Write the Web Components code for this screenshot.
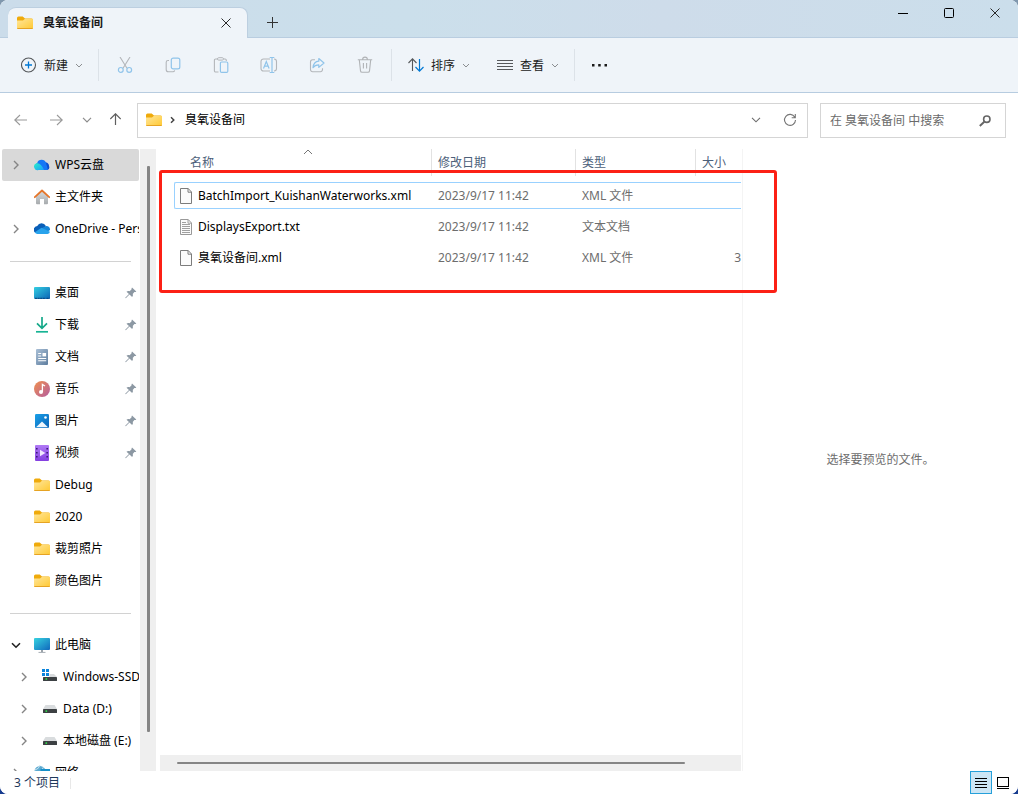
<!DOCTYPE html>
<html lang="zh-CN">
<head>
<meta charset="utf-8">
<meta name="viewport" content="width=device-width, initial-scale=1">
<title>臭氧设备间</title>
<style>
  body {
    margin: 0;
    background: linear-gradient(#7f97ad 50%, #173c8f 50%);
    color: #000;
    font: 12px/16px "Noto Sans", "Noto Sans CJK SC", sans-serif;
  }
</style>
</head>
<body>
<explorer-window></explorer-window>

<script>
const RESET = `
  *, *::before, *::after { box-sizing: border-box; }
  button { font: inherit; color: inherit; background: none; border: 0; padding: 0; margin: 0;
           display: flex; align-items: center; justify-content: center; }
  a { color: inherit; text-decoration: none; }
`;

function define(name, css, html, setup) {
  const template = document.createElement('template');
  template.innerHTML = `<style>${RESET}${css}</style>${html}`;
  customElements.define(name, class extends HTMLElement {
    constructor() {
      super();
      this.attachShadow({ mode: 'open' }).append(template.content.cloneNode(true));
    }
    connectedCallback() { if (setup) setup(this, this.shadowRoot); }
  });
}

/* Each icon: [width, height, markup] */
const ICONS = {
  folder: [16, 14, `<defs><linearGradient id="f" x1="0" y1="0" x2="1" y2="1"><stop offset="0" stop-color="#ffe69b"/><stop offset="1" stop-color="#ffc933"/></linearGradient></defs>
    <path d="M0 2a1.500 1.500 0 0 1 1.500-1.500h4.200L8 2.500h6.500A1.500 1.500 0 0 1 16 4v4H0z" fill="#efaa0b"/>
    <path d="M0 4.500h6L8 2.700h7.200a.8.8 0 0 1 .8.8v8.300A1.200 1.200 0 0 1 14.800 13H1.200A1.200 1.200 0 0 1 0 11.800z" fill="url(#f)"/>
    <path d="M.3 12.500h15.400" stroke="#e6a323"/>`],
  close: [10, 10, `<path d="M.5.5l9 9M9.500.5l-9 9" fill="none" stroke="#2a2a2a"/>`],
  plus: [11, 11, `<path d="M5.500 0v11M0 5.500h11" stroke="#333"/>`],
  minimize: [10, 10, `<path d="M0 5.500h10" stroke="#000"/>`],
  maximize: [11, 11, `<rect x=".5" y=".5" width="9" height="9" rx="1" fill="none" stroke="#000"/>`],
  add: [16, 16, `<circle cx="7.500" cy="8" r="7" fill="none" stroke="#55585b" stroke-width="1.100"/><path d="M7.500 4.500v7M4 8h7" stroke="#0078d4" stroke-width="1.300"/>`],
  down: [8, 5, `<path d="M1 1l3 3 3-3" fill="none" stroke="#8b8e91"/>`],
  downDark: [10, 6, `<path d="M1 .8l4 4 4-4" fill="none" stroke="#6c6c6c" stroke-width="1.100"/>`],
  downGrey: [10, 6, `<path d="M1 .8l4 4 4-4" fill="none" stroke="#8c8c8c" stroke-width="1.200"/>`],
  expanded: [10, 7, `<path d="M1 1.200l4 4 4-4" fill="none" stroke="#222" stroke-width="1.600"/>`],
  collapsed: [6, 10, `<path d="M1 1l4 4-4 4" fill="none" stroke="#858585" stroke-width="1.400"/>`],
  crumb: [6, 10, `<path d="M1 2.200L3.800 5 1 7.800" fill="none" stroke="#444" stroke-width="1.500"/>`],
  sorted: [10, 6, `<path d="M1 5l4-4 4 4" fill="none" stroke="#777"/>`],
  cut: [16, 16, `<path d="M3 0l7 11.200M13 0L6 11.200" fill="none" stroke="#b3b6ba" stroke-width="1.100"/><circle cx="3.800" cy="12.900" r="2.400" fill="none" stroke="#90c4ea" stroke-width="1.200"/><circle cx="12.200" cy="12.900" r="2.400" fill="none" stroke="#90c4ea" stroke-width="1.200"/>`],
  copy: [16, 16, `<path d="M4 3.500H3A1.800 1.800 0 0 0 1.200 5.300v7.200A2.300 2.300 0 0 0 3.500 14.800h4.300a2 2 0 0 0 1.900-1.500" fill="none" stroke="#b3b6ba" stroke-width="1.100"/><rect x="6.300" y="1.200" width="8.500" height="10.600" rx="1.900" fill="none" stroke="#90c4ea" stroke-width="1.200"/>`],
  paste: [16, 16, `<path d="M5 2H2.600A1.200 1.200 0 0 0 1.400 3.200v10.600A1.200 1.200 0 0 0 2.600 15H5.500M10.500 2h1.600a1.200 1.200 0 0 1 1.200 1.200V4" fill="none" stroke="#b3b6ba" stroke-width="1.100"/><rect x="4.500" y=".7" width="6" height="2.400" rx="1.200" fill="none" stroke="#b3b6ba"/><rect x="7.400" y="5" width="7.400" height="10.400" rx="1.200" fill="none" stroke="#90c4ea" stroke-width="1.200"/>`],
  rename: [18, 18, `<path d="M10 3H3.500A2.500 2.500 0 0 0 1 5.500v7A2.500 2.500 0 0 0 3.500 15H10M14 3a2.500 2.500 0 0 1 2.500 2.500v7A2.500 2.500 0 0 1 14 15" fill="none" stroke="#b3b6ba" stroke-width="1.100"/><path d="M12 1.500v15M9.700 1.500h4.600M9.700 16.500h4.600M3.500 12.500L6.300 5.500l2.800 7M4.500 10.200h3.600" fill="none" stroke="#90c4ea" stroke-width="1.200"/>`],
  share: [16, 16, `<path d="M6 2.800H3.600A2.100 2.100 0 0 0 1.500 4.900v7.700a2.100 2.100 0 0 0 2.100 2.100h7.800a2.100 2.100 0 0 0 2.100-2.100v-1.300" fill="none" stroke="#b3b6ba" stroke-width="1.100"/><path d="M9.800 1.500L15 6 9.800 10.400V7.800C7 7.800 5.300 8.600 4 10.700 4.300 7.400 6 4.500 9.800 4.200z" fill="none" stroke="#90c4ea" stroke-width="1.200" stroke-linejoin="round"/>`],
  trash: [16, 18, `<path d="M.8 3.700h14.400M5.600 3.500a2.400 2.400 0 0 1 4.800 0M2.300 3.700l1.200 11.200A1.600 1.600 0 0 0 5.100 16.300h5.800a1.600 1.600 0 0 0 1.600-1.400L13.700 3.700M6.400 7v5.500M9.600 7v5.500" fill="none" stroke="#b0b3b6" stroke-width="1.100"/>`],
  sort: [16, 16, `<path d="M4.500 14V2M.5 6l4-4.200 4 4.200" fill="none" stroke="#55585b" stroke-width="1.100"/><path d="M11.500 2v12M7.500 10l4 4.200 4-4.200" fill="none" stroke="#0078d4" stroke-width="1.200"/>`],
  lines: [16, 12, `<path d="M0 1.500h16M0 4.500h16M0 7.500h16M0 10.500h16" stroke="#55585b"/>`],
  dots: [17, 4, `<path d="M1 1h2.500v2.500H1zM7.200 1h2.500v2.500H7.200zM13.500 1H16v2.500h-2.500z" fill="#1a1a1a"/>`],
  back: [14, 12, `<path d="M13 6H1M6 1L.8 6 6 11" fill="none" stroke="#9a9a9a" stroke-width="1.100"/>`],
  forward: [14, 12, `<path d="M0 6h12M7 1l5.200 5L7 11" fill="none" stroke="#9a9a9a" stroke-width="1.100"/>`],
  up: [12, 14, `<path d="M6.500 12V1.500M1.300 6L6.500.8 11.700 6" fill="none" stroke="#5f5f5f" stroke-width="1.200"/>`],
  refresh: [14, 14, `<path d="M11.800 4.200A5.500 5.500 0 1 0 12.500 7M12.300 1v3.700H8.700" fill="none" stroke="#767676" stroke-width="1.100"/>`],
  search: [12, 12, `<circle cx="7.800" cy="4.200" r="3.200" fill="none" stroke="#666" stroke-width="1.600"/><path d="M5.300 6.700L.8 11" stroke="#666" stroke-width="1.900"/>`],
  wps: [16, 16, `<defs><linearGradient id="a" x1="0" y1="0" x2="1" y2="1"><stop offset="0" stop-color="#2bf0c8"/><stop offset="1" stop-color="#1a9bff"/></linearGradient></defs><path d="M10 5.500a3.600 3.600 0 0 1 5 3.600 3 3 0 0 1-1.500 3.900H7z" fill="#0b4fd0"/><path d="M4.500 13A3.700 3.700 0 0 1 3.200 6a4.600 4.600 0 0 1 8.800 0L14 13z" fill="#1677f5"/><path d="M4.500 13A3.500 3.500 0 0 1 2 6.500c3-1 5.500.9 8.100 6.500z" fill="url(#a)"/>`],
  home: [16, 16, `<defs><linearGradient id="h" x1="0" y1="0" x2="0" y2="1"><stop offset="0" stop-color="#d9dbdc"/><stop offset="1" stop-color="#a7abae"/></linearGradient></defs><path d="M2 7.200L8 2l6 5.200v7a1 1 0 0 1-1 1h-3V10H6v5.200H3a1 1 0 0 1-1-1z" fill="url(#h)"/><path d="M.8 8.200L8 1.500l7.200 6.700" fill="none" stroke="#e5762b" stroke-width="1.800" stroke-linecap="round" stroke-linejoin="round"/>`],
  onedrive: [16, 16, `<path d="M1 11.500A3.700 3.700 0 0 1 3.200 5 4.900 4.900 0 0 1 11.900 4.900L9 11.500z" fill="#0a5fb8"/><path d="M7 7.500l5.300-2.600A3.900 3.900 0 0 1 16 9l-3 2z" fill="#1585d8"/><path d="M.8 11.200L7.500 6.700l8.400 4a2.600 2.600 0 0 1-2.300 2.300H3.400A3 3 0 0 1 .8 11.200z" fill="#29a3ec"/>`],
  desktop: [16, 12, `<defs><linearGradient id="d" x1="0" y1="0" x2="1" y2="1"><stop offset="0" stop-color="#34cfe2"/><stop offset="1" stop-color="#0b63b5"/></linearGradient></defs><rect width="16" height="12" rx="1" fill="url(#d)"/><path d="M1 11.300h10.500M12.500 11.300h3" stroke="#0a3e77" stroke-dasharray="2 .6"/>`],
  download: [14, 16, `<path d="M7 0v11M2 6.300L7 11.300l5-5" fill="none" stroke="#17a98a" stroke-width="1.700"/><path d="M1 14.800h12" stroke="#17b394" stroke-width="1.700"/>`],
  document: [12, 16, `<defs><linearGradient id="o" x1="0" y1="0" x2="1" y2="1"><stop offset="0" stop-color="#a9bfd6"/><stop offset="1" stop-color="#5d7d9e"/></linearGradient></defs><rect width="12" height="16" rx="1" fill="url(#o)"/><path d="M2.200 4.500h3M2.200 7h3M2.200 9.500h8M2.200 11.800h8" stroke="#fff" stroke-width="1.100"/><rect x="6.500" y="4" width="3.600" height="3.400" fill="#fff"/>`],
  music: [16, 16, `<defs><linearGradient id="m" x1="0" y1="0" x2="1" y2="1"><stop offset="0" stop-color="#f0904e"/><stop offset="1" stop-color="#b45da0"/></linearGradient></defs><circle cx="8" cy="8" r="8" fill="url(#m)"/><circle cx="7" cy="11" r="2" fill="#fff"/><path d="M8.400 11V3.500L11 5" fill="none" stroke="#fff" stroke-width="1.300"/>`],
  picture: [14, 14, `<defs><linearGradient id="p" x1="0" y1="0" x2="1" y2="1"><stop offset="0" stop-color="#1aa0e8"/><stop offset="1" stop-color="#0a63b8"/></linearGradient></defs><rect width="14" height="14" rx="1.200" fill="url(#p)"/><path d="M1 13.200L7 7.500l6 5.700z" fill="#eef6fd"/><circle cx="10.500" cy="3.500" r="1.300" fill="#fff"/>`],
  video: [14, 16, `<defs><linearGradient id="v" x1="0" y1="0" x2="0" y2="1"><stop offset="0" stop-color="#b07af5"/><stop offset="1" stop-color="#843fe0"/></linearGradient></defs><rect width="14" height="16" rx="1" fill="url(#v)"/><path d="M1.800 3v12M12.200 3v12" stroke="#3a1a78" stroke-width="1.600" stroke-dasharray="1.600 2.400"/><path d="M5 4.700L10.300 8 5 11.300z" fill="#f1e9fd"/>`],
  pc: [16, 16, `<defs><linearGradient id="c" x1="0" y1="0" x2="1" y2="1"><stop offset="0" stop-color="#37d3e0"/><stop offset="1" stop-color="#1068bd"/></linearGradient></defs><rect y="1" width="16" height="12" rx="1" fill="url(#c)"/><path d="M7 13h2v2H7z" fill="#9aa2a8"/><path d="M4.500 15.400h7" stroke="#a5adb3"/>`],
  ssd: [16, 16, `<path d="M0 0h3v3H0zM4 0h3v3H4zM0 4h3v3H0zM4 4h3v3H4z" fill="#0a84dc"/><path d="M7.500 5h4.500l3 3H7.500z" fill="#d9dcde"/><rect x="1" y="8" width="14" height="4" rx=".6" fill="#3c4043"/><rect x="3.500" y="9.200" width="1.600" height="1.600" fill="#2fe04a"/>`],
  disk: [14, 8, `<path d="M2.500 0h9L14 4H0z" fill="#d9dcde"/><rect y="4" width="14" height="4" rx=".6" fill="#3c4043"/><rect x="2.500" y="5.300" width="1.600" height="1.600" fill="#2fe04a"/>`],
  network: [16, 16, `<circle cx="6" cy="6.500" r="5.500" fill="#5ba9d0"/><path d="M1 5q4-1 5-5M3 10Q8 7 9.500 2" fill="none" stroke="#cde6f2"/><rect x="6.500" y="4" width="9.500" height="8" fill="#168fc9"/>`],
  pin: [12, 12, `<path d="M7 .5l4.300 4c-.6.700-1.300.7-1.900.5L7.700 6.900c.5 1.200.2 2.200-.6 3L4.500 7.500.8 11.300l-.6-.6L4 7 1.500 4.700c.9-.8 2-1 3.100-.5L6.600 2.300C6.400 1.700 6.500 1.100 7 .5z" fill="#8c98a3"/>`],
  file: [12, 16, `<path d="M.5.5h7.700L11.500 4v11.500H.5z" fill="#fbfbfb" stroke="#7c7c7c"/><path d="M8 .5v3.700h3.500" fill="none" stroke="#7c7c7c"/>`],
  text: [12, 16, `<path d="M.5.5h7.700L11.500 4v11.500H.5z" fill="#fbfbfb" stroke="#999"/><path d="M8 .5v3.700h3.500M2 3.500h4M2 5.500h8M2 7.500h8M2 9.500h8M2 11.500h8M2 13.500h8" fill="none" stroke="#a0a0a0"/>`],
  details: [12, 10, `<path d="M0 .5h12M0 3.500h12M0 6.500h12M0 9.500h12" stroke="#000"/>`],
  preview: [12, 12, `<rect x=".5" y=".5" width="11" height="9" fill="#fff" stroke="#000"/><path d="M0 11.500h12" stroke="#000"/>`]
};

define('ex-icon', `
  :host { display: block; flex: none; }
  svg { display: block; }
`, '', (host, root) => {
  const [w, h, markup] = ICONS[host.getAttribute('name')];
  root.querySelector('svg')?.remove();
  root.querySelector('style').insertAdjacentHTML('afterend',
    `<svg width="${w}" height="${h}" viewBox="0 0 ${w} ${h}" aria-hidden="true">${markup}</svg>`);
});

define('title-bar', `
  :host { display: flex; height: 38px; padding-left: 8px; border-bottom: 1px solid #b9cde0;
          background: linear-gradient(90deg, #cbdcea, #cbdfeb 40%, #cedcea 65%, #cbdeeb); }
  .tab { position: relative; display: flex; align-items: center; width: 240px; margin: 7px 0 -1px; padding: 0 16px 0 9px;
         background: #eff4f9; border: 1px solid #bccfe0; border-width: 1px 1px 0 0; border-radius: 8px 8px 0 0; font-weight: 600; color: #1a1a1a; }
  .name { flex: 1; padding-left: 10px; }
  .new { width: 48px; height: 31px; margin-top: 7px; }
  .controls { display: flex; margin-left: auto; }
  .controls button { width: 46px; height: 26px; }
`, `
  <div class="tab"><ex-icon name="folder"></ex-icon><span class="name"><slot></slot></span>
    <button aria-label="关闭标签页"><ex-icon name="close"></ex-icon></button></div>
  <button class="new" aria-label="新建标签页"><ex-icon name="plus"></ex-icon></button>
  <div class="controls">
    <button aria-label="最小化"><ex-icon name="minimize"></ex-icon></button>
    <button aria-label="最大化"><ex-icon name="maximize"></ex-icon></button>
    <button aria-label="关闭"><ex-icon name="close"></ex-icon></button>
  </div>
`);

define('command-bar', `
  :host { display: flex; align-items: center; height: 55px; background: #eff4f9; border-bottom: 1px solid #b7cce0; color: #1a1a1a; }
  .menu { gap: 7px; height: 32px; }
  .menu span { padding-top: 2px; }
  .menu.first { margin-left: 21px; }
  .menu + .menu { margin-left: 27px; }
  .tool { width: 48px; height: 32px; }
  i { width: 1px; height: 32px; background: #dce2e8; margin: 0 2px 0 15px; }
  i.before-menu { margin: 0 16px 0 2px; }
  i.before-more { margin-right: 0; }
`, `
  <button class="menu first"><ex-icon name="add"></ex-icon><span>新建</span><ex-icon name="down"></ex-icon></button>
  <i></i>
  <button class="tool" aria-label="剪切"><ex-icon name="cut"></ex-icon></button>
  <button class="tool" aria-label="复制"><ex-icon name="copy"></ex-icon></button>
  <button class="tool" aria-label="粘贴"><ex-icon name="paste"></ex-icon></button>
  <button class="tool" aria-label="重命名"><ex-icon name="rename"></ex-icon></button>
  <button class="tool" aria-label="共享"><ex-icon name="share"></ex-icon></button>
  <button class="tool" aria-label="删除"><ex-icon name="trash"></ex-icon></button>
  <i class="before-menu"></i>
  <button class="menu"><ex-icon name="sort"></ex-icon><span>排序</span><ex-icon name="down"></ex-icon></button>
  <button class="menu"><ex-icon name="lines"></ex-icon><span>查看</span><ex-icon name="down"></ex-icon></button>
  <i class="before-more"></i>
  <button class="tool" aria-label="更多"><ex-icon name="dots"></ex-icon></button>
`);

define('address-bar', `
  :host { display: flex; padding: 10px 12px 11px 3px; background: #fff; }
  .nav { width: 36px; height: 34px; }
  .nav.narrow { width: 24px; }
  .nav.up { width: 32px; margin-right: 6px; }
  .box { display: flex; align-items: center; height: 35px; border: 1px solid #d5d5d5; }
  .path { flex: 1; min-width: 0; padding: 0 0 1px 8px; }
  .path a { margin-left: 9px; }
  .crumb { margin-left: 8px; }
  .path button { width: 34px; height: 32px; }
  .path button:first-of-type { margin-left: auto; }
  .search { width: 186px; margin-left: 12px; padding: 0 14px 0 9px; }
  input { flex: 1; min-width: 0; border: 0; padding: 0; outline: 0; background: none; font: inherit; }
  input::placeholder { color: #6a6a6a; }
`, `
  <button class="nav" aria-label="后退"><ex-icon name="back"></ex-icon></button>
  <button class="nav" aria-label="前进"><ex-icon name="forward"></ex-icon></button>
  <button class="nav narrow" aria-label="最近位置"><ex-icon name="downGrey"></ex-icon></button>
  <button class="nav up" aria-label="向上"><ex-icon name="up"></ex-icon></button>
  <div class="box path"><ex-icon name="folder"></ex-icon><ex-icon class="crumb" name="crumb"></ex-icon><a href="#"><slot></slot></a>
    <button aria-label="以前的位置"><ex-icon name="downDark"></ex-icon></button>
    <button aria-label="刷新"><ex-icon name="refresh"></ex-icon></button></div>
  <label class="box search"><input type="text" aria-label="搜索" placeholder="在 臭氧设备间 中搜索"><ex-icon name="search"></ex-icon></label>
`);

function createIcon(name) {
  const el = document.createElement('ex-icon');
  el.setAttribute('name', name);
  return el;
}

define('tree-item', `
  :host { display: block; height: 32px; }
  a { display: flex; align-items: center; height: 32px; margin-left: 2px; padding-left: 6px; border-radius: 2px; white-space: nowrap; }
  :host([selected]) a { background: #d9d9d9; }
  :host([child]) a { padding-left: 14px; }
  .arrow, .icon { flex: none; display: flex; justify-content: center; width: 16px; }
  .icon { margin: 0 5px 0 10px; }
  .label { flex: 1; min-width: 0; overflow: hidden; }
  .pin { margin-right: 2px; }
`, `<a href="#"><span class="arrow"></span><span class="icon"></span><span class="label"><slot></slot></span></a>`,
(host, root) => {
  const arrow = host.getAttribute('arrow');
  if (arrow) root.querySelector('.arrow').replaceChildren(createIcon(arrow));
  root.querySelector('.icon').replaceChildren(createIcon(host.getAttribute('icon')));
  if (host.hasAttribute('pinned') && !root.querySelector('.pin')) {
    const pin = createIcon('pin');
    pin.className = 'pin';
    root.querySelector('a').append(pin);
  }
});

define('nav-tree', `
  :host { display: flex; min-height: 0; overflow: hidden; }
  nav { width: 139px; margin-right: 1px; overflow: hidden; }
  hr { height: 1px; margin: 16px 8px 15px 10px; border: 0; background: #d2d2d2; }
  .track { width: 16px; padding: 17px 6px 39px 7px; background: #efefef; display: flex; }
  .thumb { flex: 1; background: #858585; border-radius: 1px; }
`, `
  <nav>
    <tree-item icon="wps" arrow="collapsed" selected>WPS云盘</tree-item>
    <tree-item icon="home">主文件夹</tree-item>
    <tree-item icon="onedrive" arrow="collapsed">OneDrive - Personal</tree-item>
    <hr>
    <tree-item icon="desktop" pinned>桌面</tree-item>
    <tree-item icon="download" pinned>下载</tree-item>
    <tree-item icon="document" pinned>文档</tree-item>
    <tree-item icon="music" pinned>音乐</tree-item>
    <tree-item icon="picture" pinned>图片</tree-item>
    <tree-item icon="video" pinned>视频</tree-item>
    <tree-item icon="folder">Debug</tree-item>
    <tree-item icon="folder">2020</tree-item>
    <tree-item icon="folder">裁剪照片</tree-item>
    <tree-item icon="folder">颜色图片</tree-item>
    <hr>
    <tree-item icon="pc" arrow="expanded">此电脑</tree-item>
    <tree-item icon="ssd" arrow="collapsed" child>Windows-SSD</tree-item>
    <tree-item icon="disk" arrow="collapsed" child>Data (D:)</tree-item>
    <tree-item icon="disk" arrow="collapsed" child>本地磁盘 (E:)</tree-item>
    <tree-item icon="network" arrow="collapsed">网络</tree-item>
  </nav>
  <div class="track"><div class="thumb"></div></div>
`);

define('file-list', `
  :host { position: relative; display: flex; flex-direction: column; min-width: 0; border-right: 1px solid #f4f4f4; padding-right: 1px; }
  table { width: 100%; table-layout: fixed; border-collapse: collapse; }
  th, td { padding: 0; height: 31px; text-align: left; font-weight: 400; color: #6d6d6d; white-space: nowrap; }
  th { color: #4c607a; position: relative; vertical-align: top; }
  th span { display: block; height: 27px; line-height: 28px; padding-left: 6px; border-left: 1px solid #e2e2e2; }
  th:first-child span { padding-left: 30px; border: 0; }
  th ex-icon { position: absolute; left: 50%; top: 0; margin-left: 7px; }
  .name { width: 271px; } .date { width: 144px; } .type { width: 120px; }
  td div { display: flex; align-items: center; height: 27px; padding-left: 7px; border: solid transparent; border-width: 1px 0; }
  td:first-child div { gap: 6px; margin-left: 14px; padding-left: 5px; border-left-width: 1px; border-radius: 2px 0 0 2px; color: #000; }
  td:last-child div { justify-content: flex-end; padding-left: 0; }
  tr.focused div { border-color: #99d1ff; }
  .mark { position: absolute; left: -1px; right: -35px; top: 21px; height: 123px; border: 3px solid #fc2015; border-radius: 3px; pointer-events: none; }
  .track { margin-top: auto; height: 16px; padding: 7px 56px 7px 17px; background: #efefef; display: flex; }
  .thumb { flex: 1; background: #858585; border-radius: 1px; }
`, `
  <table>
    <thead><tr>
      <th class="name"><span>名称</span><ex-icon name="sorted"></ex-icon></th>
      <th class="date"><span>修改日期</span></th>
      <th class="type"><span>类型</span></th>
      <th><span>大小</span></th>
    </tr></thead>
    <tbody>
      <tr class="focused"><td><div><ex-icon name="file"></ex-icon>BatchImport_KuishanWaterworks.xml</div></td><td><div>2023/9/17 11:42</div></td><td><div>XML 文件</div></td><td><div></div></td></tr>
      <tr><td><div><ex-icon name="text"></ex-icon>DisplaysExport.txt</div></td><td><div>2023/9/17 11:42</div></td><td><div>文本文档</div></td><td><div></div></td></tr>
      <tr><td><div><ex-icon name="file"></ex-icon>臭氧设备间.xml</div></td><td><div>2023/9/17 11:42</div></td><td><div>XML 文件</div></td><td><div>3</div></td></tr>
    </tbody>
  </table>
  <div class="mark"></div>
  <div class="track"><div class="thumb"></div></div>
`);

define('preview-pane', `
  :host { display: flex; align-items: center; justify-content: center; color: #6d6d6d; }
`, `<slot></slot>`);

define('status-bar', `
  :host { display: flex; height: 23px; padding: 0 4px 0 14px; color: #1e395b; background: #fff; }
  span { line-height: 23px; }
  i { width: 1px; height: 11px; margin: 7px auto 0 10px; background: #e8e8e8; }
  button { width: 22px; height: 23px; }
  .on { background: #cce6f5; border: 1px solid #26a0da; }
`, `
  <span><slot></slot></span><i></i>
  <button class="on" aria-label="详细信息"><ex-icon name="details"></ex-icon></button>
  <button aria-label="大缩略图"><ex-icon name="preview"></ex-icon></button>
`);

define('explorer-window', `
  :host { display: grid; grid-template-rows: auto auto auto minmax(0, 1fr) auto; height: 100vh; overflow: hidden;
          border-radius: 8px; background: #fff; }
  main { display: grid; grid-template-columns: 156px minmax(0, 1fr) 275px; min-height: 0; }
  file-list { margin-left: 4px; }
`, `
  <title-bar>臭氧设备间</title-bar>
  <command-bar></command-bar>
  <address-bar>臭氧设备间</address-bar>
  <main>
    <nav-tree></nav-tree>
    <file-list></file-list>
    <preview-pane>选择要预览的文件。</preview-pane>
  </main>
  <status-bar>3 个项目</status-bar>
`);
</script>
</body>
</html>
